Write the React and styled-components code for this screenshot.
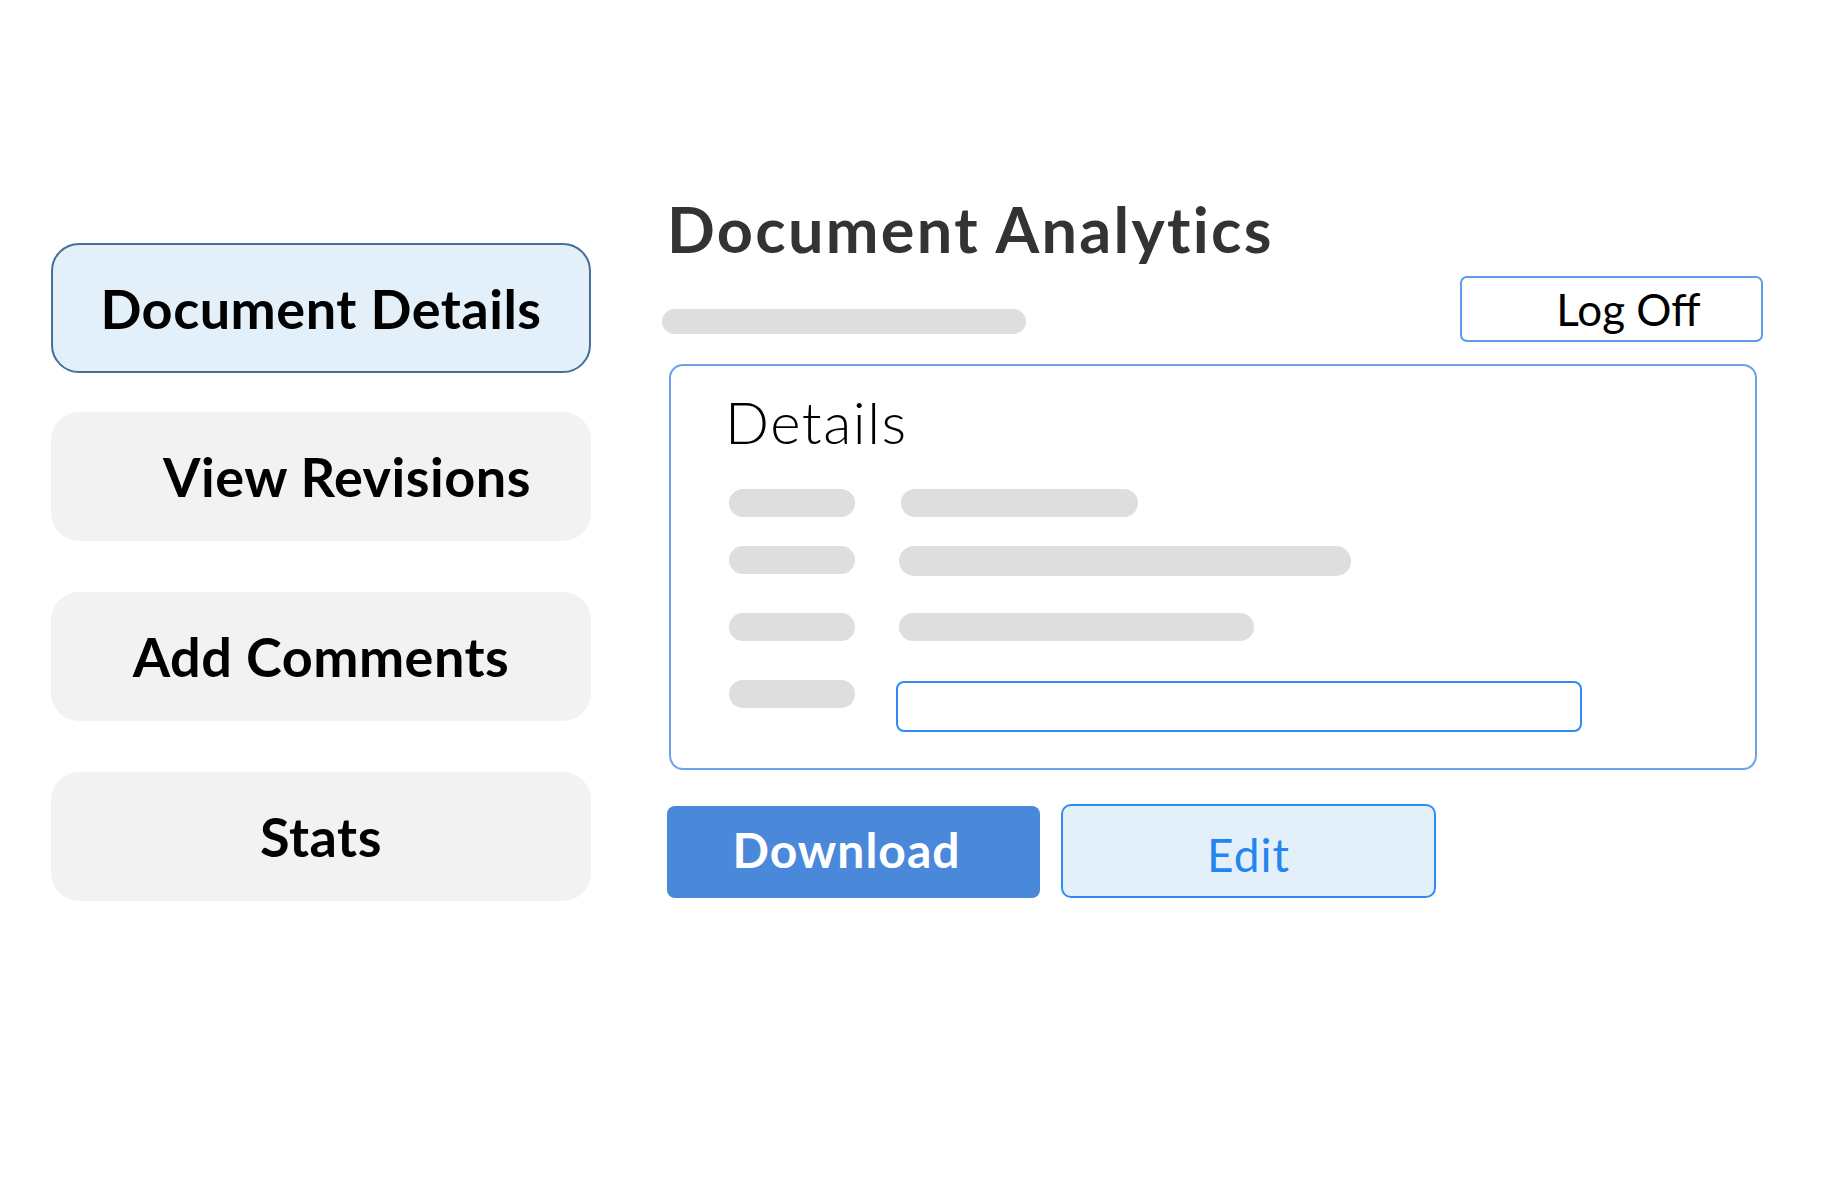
import React from "react";
import styled, { createGlobalStyle } from "styled-components";

const GlobalStyle = createGlobalStyle`
  html, body {
    margin: 0;
    padding: 0;
    background: #ffffff;
  }

  body {
    font-family: Lato, "Open Sans", Arial, sans-serif;
    color: #000;
  }
`;

const Page = styled.div`
  width: 1821px;
  height: 1184px;
  display: flex;
  align-items: flex-start;
  padding: 197px 0 0 51px;
  box-sizing: border-box;
`;

const Sidebar = styled.nav`
  width: 540px;
  margin-top: 46px;
  display: flex;
  flex-direction: column;
  gap: 51px;
`;

const NavButton = styled.button`
  height: ${(p) => (p.$active ? "130px" : "129px")};
  margin-bottom: ${(p) => (p.$active ? "-12px" : "0")};
  display: flex;
  align-items: center;
  justify-content: center;
  padding: 0 0 0 ${(p) => p.$shift || 0}px;
  box-sizing: border-box;
  border: ${(p) => (p.$active ? "2px solid #46709a" : "none")};
  border-radius: 28px;
  background: ${(p) => (p.$active ? "#e3f0f9" : "#f2f2f2")};
  font-family: Lato, sans-serif;
  font-weight: 700;
  font-size: 54px;
  letter-spacing: 0.5px;
  color: #000;
  cursor: pointer;
`;

const Main = styled.main`
  width: 1096px;
  margin-left: 76px;
  display: flex;
  flex-direction: column;
`;

const Title = styled.h1`
  margin: 0;
  font-family: Lato, sans-serif;
  font-weight: 700;
  font-size: 63px;
  letter-spacing: 2.3px;
  line-height: 1;
  color: #333333;
`;

const Toolbar = styled.div`
  margin-top: 16px;
  display: flex;
  justify-content: space-between;
  align-items: flex-end;
`;

const Skeleton = styled.div`
  width: ${(p) => p.$w}px;
  height: ${(p) => p.$h || 28}px;
  border-radius: 999px;
  background: #dedede;
  flex-shrink: 0;
`;

const TitleBar = styled(Skeleton)`
  margin: 0 0 8px -5px;
`;

const LogOff = styled.button`
  width: 303px;
  height: 66px;
  padding: 0 0 0 34px;
  box-sizing: border-box;
  border: 2px solid #5e9de8;
  border-radius: 7px;
  background: #fff;
  font-family: Lato, sans-serif;
  font-size: 44px;
  color: #000;
  cursor: pointer;
`;

const Card = styled.section`
  margin: 22px 0 0 2px;
  width: 1088px;
  height: 406px;
  box-sizing: border-box;
  border: 2px solid #6ea2ea;
  border-radius: 14px;
  padding: 27px 0 0 58px;
`;

const CardTitle = styled.h2`
  margin: 0 0 0 -4px;
  font-family: Lato, sans-serif;
  font-weight: 300;
  font-size: 58px;
  letter-spacing: 1.5px;
  line-height: 1;
  color: #000;
`;

const FieldRow = styled.div`
  margin-top: ${(p) => p.$top}px;
  display: flex;
  align-items: flex-start;
  gap: ${(p) => p.$gap || 44}px;
`;

const InputBox = styled.div`
  width: 686px;
  height: 51px;
  margin-top: 1px;
  box-sizing: border-box;
  border: 2px solid #2f8cf5;
  border-radius: 8px;
  background: #fff;
`;

const Actions = styled.div`
  margin-top: 34px;
  display: flex;
  align-items: flex-end;
  gap: 21px;
`;

const PrimaryButton = styled.button`
  width: 373px;
  height: 92px;
  border: none;
  border-radius: 8px;
  background: #4a89da;
  font-family: Lato, sans-serif;
  font-weight: 700;
  font-size: 48px;
  letter-spacing: 1px;
  color: #fff;
  padding: 0 14px 6px 0;
  cursor: pointer;
`;

const SecondaryButton = styled.button`
  width: 375px;
  height: 94px;
  box-sizing: border-box;
  border: 2px solid #2f8cf5;
  border-radius: 10px;
  background: #e3f0f9;
  font-family: Lato, sans-serif;
  font-size: 46px;
  letter-spacing: 1px;
  color: #2585f0;
  padding: 6px 0 0;
  cursor: pointer;
`;

const navItems = [
  { label: "Document Details", active: true },
  { label: "View Revisions", shift: 52 },
  { label: "Add Comments" },
  { label: "Stats" },
];

export default function App() {
  return (
    <>
      <GlobalStyle />
      <Page>
        <Sidebar>
          {navItems.map((item) => (
            <NavButton key={item.label} $active={item.active} $shift={item.shift}>
              {item.label}
            </NavButton>
          ))}
        </Sidebar>

        <Main>
          <Title>Document Analytics</Title>
          <Toolbar>
            <TitleBar $w={364} $h={25} />
            <LogOff>Log Off</LogOff>
          </Toolbar>

          <Card>
            <CardTitle>Details</CardTitle>
            <FieldRow $top={38} $gap={46}>
              <Skeleton $w={126} />
              <Skeleton $w={237} />
            </FieldRow>
            <FieldRow $top={29}>
              <Skeleton $w={126} />
              <Skeleton $w={452} $h={30} />
            </FieldRow>
            <FieldRow $top={37}>
              <Skeleton $w={126} />
              <Skeleton $w={355} />
            </FieldRow>
            <FieldRow $top={39} $gap={41}>
              <Skeleton $w={126} />
              <InputBox />
            </FieldRow>
          </Card>

          <Actions>
            <PrimaryButton>Download</PrimaryButton>
            <SecondaryButton>Edit</SecondaryButton>
          </Actions>
        </Main>
      </Page>
    </>
  );
}
